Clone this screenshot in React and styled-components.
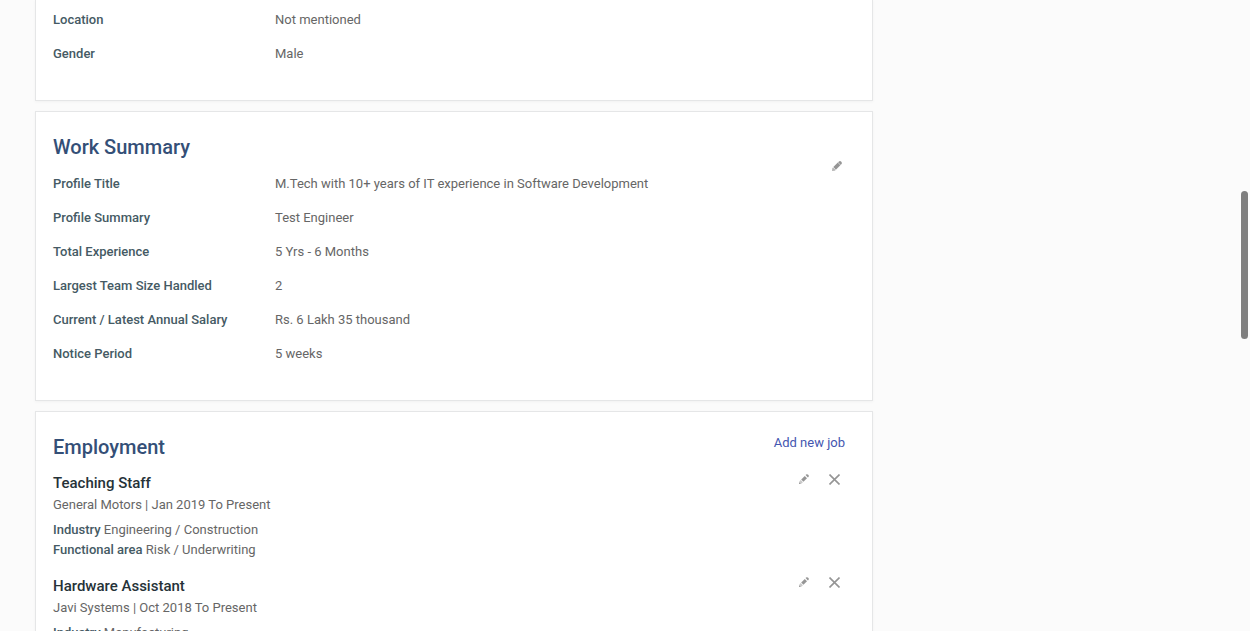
import React from "react";
import styled, { createGlobalStyle } from "styled-components";

const GlobalStyle = createGlobalStyle`
  *, *::before, *::after { box-sizing: border-box; }
  html, body { margin: 0; height: 100%; }
  body {
    background: #fbfbfb;
    color: #666666;
    font-family: Roboto, "Liberation Sans", sans-serif;
    font-size: 13px;
    line-height: 20px;
  }
`;

const Viewport = styled.div`
  height: 100vh;
  overflow: hidden;
`;

const Page = styled.div`
  display: grid;
  grid-template-columns: minmax(0, 1fr) 342px;
  padding: 0 35px;
`;

const Column = styled.main`
  display: flex;
  flex-direction: column;
  gap: 10px;
`;

const Card = styled.section`
  background: #ffffff;
  border: 1px solid #e5e6e7;
  box-shadow: 0 1px 3px rgba(0, 0, 0, 0.04);
  padding: 20px 27px 29px 17px;
  ${(p) => p.$continued && "border-top: 0; padding-top: 3px;"}
`;

const CardHeader = styled.header`
  display: flex;
  justify-content: space-between;
  margin-bottom: ${(p) => p.$gap}px;
`;

const CardTitle = styled.h2`
  margin: 0;
  color: #344f77;
  font-size: 20px;
  font-weight: 500;
  line-height: 30px;
`;

const AddLink = styled.a`
  color: #4456b0;
  line-height: 22px;
  text-decoration: none;
`;

const IconButton = styled.button`
  display: flex;
  align-items: flex-start;
  width: 13px;
  height: 16px;
  padding: 2px 0 0;
  border: 0;
  background: none;
  color: #959595;
  cursor: pointer;

  svg { flex: none; }
`;

const HeaderAction = styled.div`
  align-self: flex-end;
  height: 3px;
`;

const Details = styled.dl`
  margin: 0;
`;

const DetailRow = styled.div`
  display: grid;
  grid-template-columns: 222px minmax(0, 1fr);
  padding: 7px 0;
`;

const Label = styled.dt`
  color: #455a64;
  font-weight: 500;
`;

const Value = styled.dd`
  margin: 0;
`;

const JobList = styled.div`
  display: flex;
  flex-direction: column;
  gap: 15px;
`;

const Job = styled.article`
  display: flex;
  justify-content: space-between;
`;

const JobTitle = styled.h3`
  margin: 0 0 1px;
  color: #263238;
  font-size: 15px;
  font-weight: 500;
  line-height: 22px;
`;

const JobText = styled.p`
  margin: 0;
`;

const Facts = styled.div`
  margin-top: 5px;
`;

const Strong = styled.strong`
  color: #455a64;
  font-weight: 500;
`;

const Actions = styled.div`
  display: flex;
  gap: 17px;
  padding-right: 3px;
`;

const ScrollThumb = styled.div`
  position: fixed;
  top: 191px;
  right: 2px;
  width: 7px;
  height: 148px;
  border-radius: 4px;
  background: #7f7f7f;
`;

const PencilIcon = () => (
  <svg width="10" height="10" viewBox="0 0 10 10" fill="currentColor" aria-hidden="true">
    <path d="M6.700.7Q8-.5 9.300.7 10.500 2 9.300 3.300L8.700 3.900 6.100 1.300z" />
    <path d="M5.800 1.600 8.400 4.200 3.900 8.700 1.300 6.100z" />
    <path d="M1 6.400 3.600 9 2.800 9.700 0 10 .3 7.200z" opacity=".7" />
  </svg>
);

const SmallPencilIcon = () => (
  <svg width="10" height="10" viewBox="0 0 10 10" fill="currentColor" aria-hidden="true">
    <path d="M7 .6Q8.200-.3 9.200.8 10.300 1.900 9.400 3L8.900 3.400 6.600 1.100z" />
    <path d="M5.800 2 8 4.200 4.400 7.800 2.200 5.600z" />
    <path d="M1.700 6.100 3.900 8.300 2.600 9.500 0 10 .5 7.300z" opacity=".5" />
    <path d="M.3 8.200 1.800 9.700 0 10z" />
  </svg>
);

const CrossIcon = () => (
  <svg width="11" height="11" viewBox="0 0 11 11" fill="none" stroke="currentColor" strokeWidth="1.600" aria-hidden="true">
    <path d="M.5.5 10.500 10.500M10.500.5.5 10.500" />
  </svg>
);

const personal = [
  ["Location", "Not mentioned"],
  ["Gender", "Male"],
];

const summary = [
  ["Profile Title", "M.Tech with 10+ years of IT experience in Software Development"],
  ["Profile Summary", "Test Engineer"],
  ["Total Experience", "5 Yrs - 6 Months"],
  ["Largest Team Size Handled", "2"],
  ["Current / Latest Annual Salary", "Rs. 6 Lakh 35 thousand"],
  ["Notice Period", "5 weeks"],
];

const jobs = [
  {
    title: "Teaching Staff",
    period: "General Motors | Jan 2019 To Present",
    facts: [["Industry", "Engineering / Construction"], ["Functional area", "Risk / Underwriting"]],
  },
  {
    title: "Hardware Assistant",
    period: "Javi Systems | Oct 2018 To Present",
    facts: [["Industry", "Manufacturing"]],
  },
];

const DetailList = ({ items }) => (
  <Details>
    {items.map(([label, value]) => (
      <DetailRow key={label}>
        <Label>{label}</Label>
        <Value>{value}</Value>
      </DetailRow>
    ))}
  </Details>
);

export default function App() {
  return (
    <Viewport>
      <GlobalStyle />
      <Page>
        <Column>
          <Card $continued>
            <DetailList items={personal} />
          </Card>
          <Card>
            <CardHeader $gap={5}>
              <CardTitle>Work Summary</CardTitle>
              <HeaderAction>
                <IconButton type="button" aria-label="Edit work summary">
                  <PencilIcon />
                </IconButton>
              </HeaderAction>
            </CardHeader>
            <DetailList items={summary} />
          </Card>
          <Card>
            <CardHeader $gap={10}>
              <CardTitle>Employment</CardTitle>
              <AddLink href="#add-job">Add new job</AddLink>
            </CardHeader>
            <JobList>
              {jobs.map((job) => (
                <Job key={job.title}>
                  <div>
                    <JobTitle>{job.title}</JobTitle>
                    <JobText>{job.period}</JobText>
                    <Facts>
                      {job.facts.map(([name, value]) => (
                        <JobText key={name}>
                          <Strong>{name}</Strong> {value}
                        </JobText>
                      ))}
                    </Facts>
                  </div>
                  <Actions>
                    <IconButton type="button" aria-label={`Edit ${job.title}`}>
                      <SmallPencilIcon />
                    </IconButton>
                    <IconButton type="button" aria-label={`Delete ${job.title}`}>
                      <CrossIcon />
                    </IconButton>
                  </Actions>
                </Job>
              ))}
            </JobList>
          </Card>
        </Column>
      </Page>
      <ScrollThumb />
    </Viewport>
  );
}
